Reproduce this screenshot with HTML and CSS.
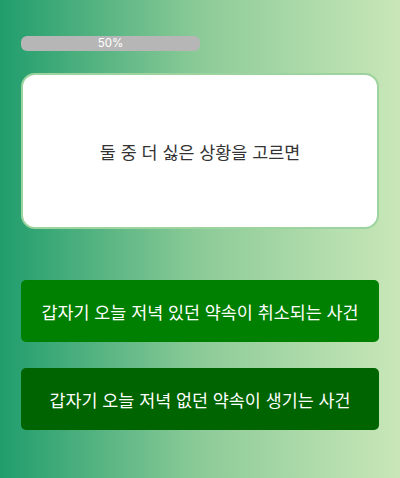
FILE: index.html
```html
<!DOCTYPE html>
<html lang="ko">
  <head>
    <meta charset="UTF-8" />
    <meta name="viewport" content="width=device-width, initial-scale=1.0" />
    <title>밸런스 게임</title>
    <link rel="stylesheet" href="styles.css">
  </head>
  <body>
    <div class="game">
      <div class="progress">
        <div class="progress-label">50%</div>
      </div>

      <div class="question-card">
        <p class="question-text">둘 중 더 싫은 상황을 고르면</p>
      </div>

      <div class="choices">
        <button class="choice-btn choice-a">갑자기 오늘 저녁 있던 약속이 취소되는 사건</button>
        <button class="choice-btn choice-b">갑자기 오늘 저녁 없던 약속이 생기는 사건</button>
      </div>
    </div>
  </body>
</html>
```

FILE: styles.css
```css
body {
  margin: 0;
  min-height: 100vh;
  font-family: "Noto Sans CJK KR", "Noto Sans", sans-serif;
  background: linear-gradient(to right, #209d6c, #8ccb98 50%, #c9e7b8);
}

.game {
  padding: 36px 21px 0;
}

.progress {
  width: 179px;
  height: 15px;
  border-radius: 6px;
  background-color: #b6b6b6;
  display: flex;
  justify-content: center;
  align-items: center;
}

.progress-label {
  color: white;
  font-family: "Inter", sans-serif;
  font-size: 11.5px;
  line-height: 15px;
}

.question-card {
  margin-top: 22px;
  height: 152px;
  background: white;
  border: 2px solid #9dd39e;
  border-radius: 14px;
  display: flex;
  justify-content: center;
  align-items: center;
}

.question-text {
  margin: 0;
  color: #333;
  font-size: 17.4px;
}

.choices {
  margin-top: 51px;
  display: flex;
  flex-direction: column;
  gap: 26px;
}

.choice-btn {
  height: 62px;
  border: none;
  border-radius: 5px;
  color: white;
  font-family: inherit;
  font-size: 17.4px;
  cursor: pointer;
}

.choice-a {
  background-color: #008000;
}

.choice-b {
  background-color: #006400;
}
```
